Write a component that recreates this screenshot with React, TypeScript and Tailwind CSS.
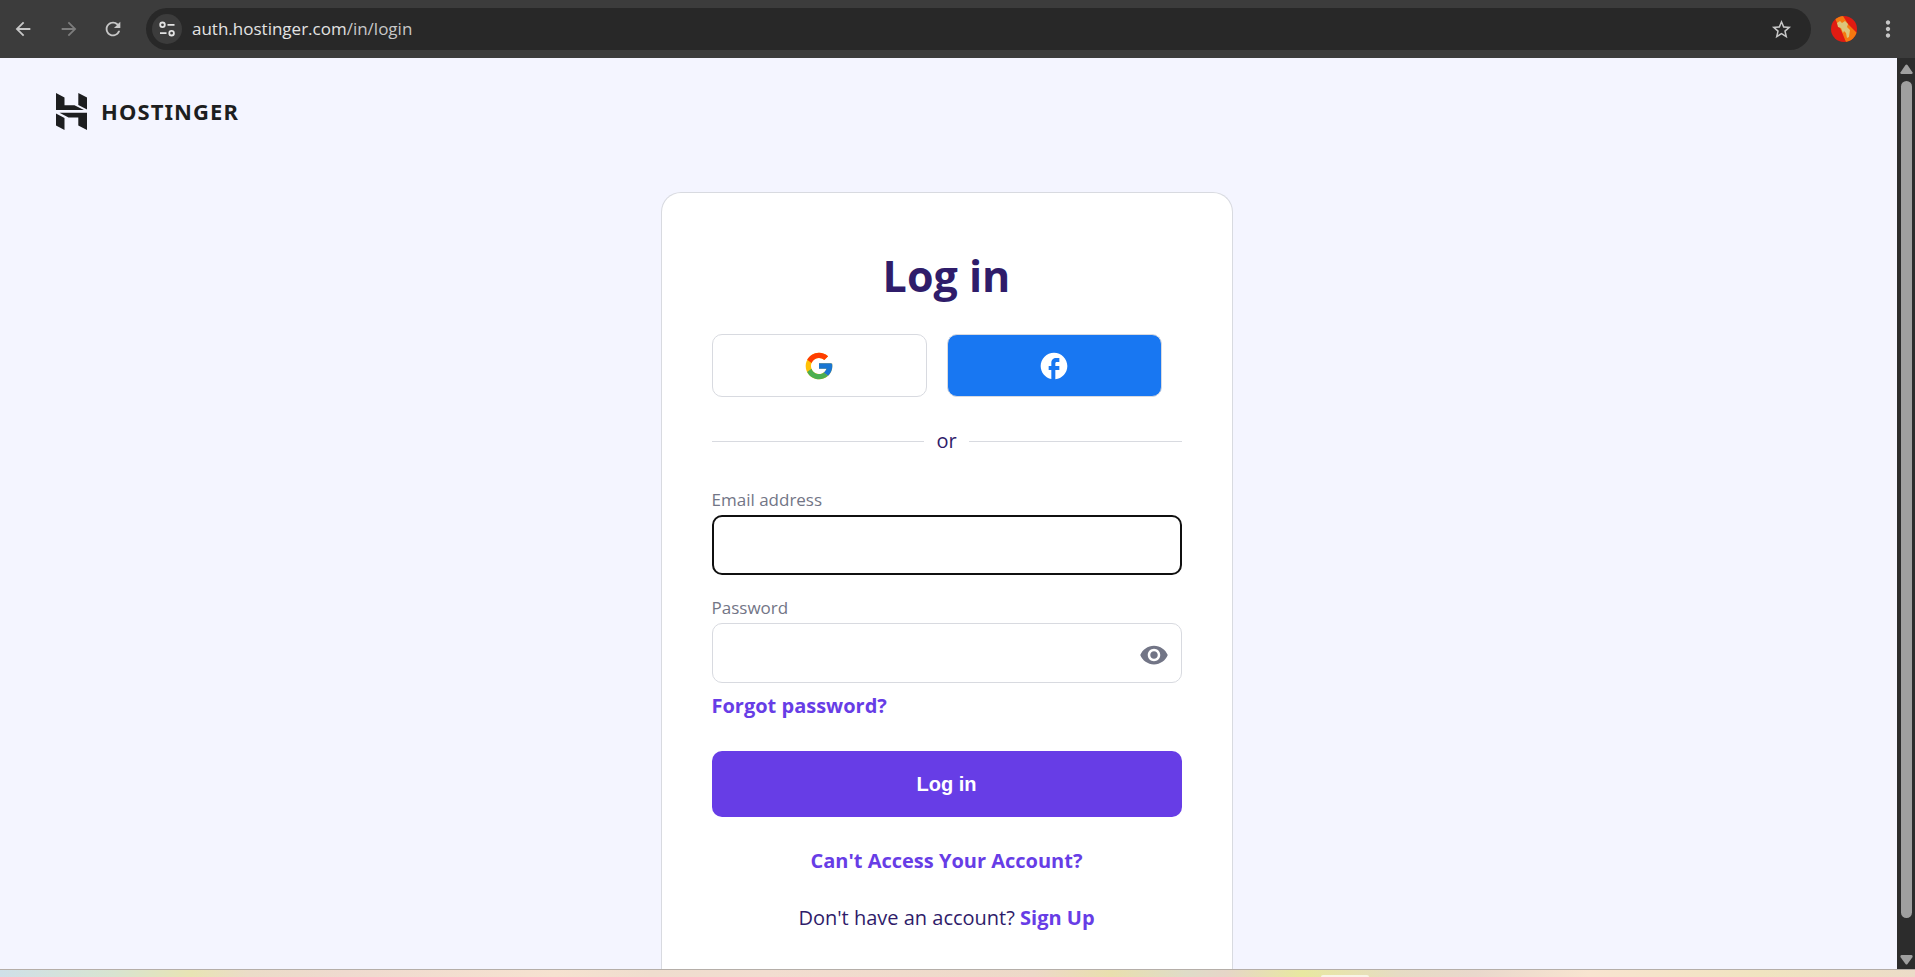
import { useState } from "react";
import { FcGoogle } from "react-icons/fc";
import {
  MdArrowBack,
  MdArrowForward,
  MdFacebook,
  MdMoreVert,
  MdRefresh,
  MdStarBorder,
  MdVisibility,
} from "react-icons/md";

function BrowserBar() {
  return (
    <header className="flex h-[58px] shrink-0 items-center bg-[#3c3c3c] pr-3.5 pl-3 text-[#c7c7c7]">
      <button type="button" aria-label="Back" className="mr-6">
        <MdArrowBack size={22} />
      </button>
      <button type="button" aria-label="Forward" className="mr-[22px] text-[#7d7d7d]">
        <MdArrowForward size={22} />
      </button>
      <button type="button" aria-label="Reload" className="mr-[22px]">
        <MdRefresh size={22} />
      </button>

      <div className="flex h-[42px] flex-1 items-center rounded-full bg-[#282828] pr-[18px] pl-1.5">
        <button
          type="button"
          aria-label="Site information"
          className="flex size-[30px] items-center justify-center rounded-full bg-[#3c3c3c]"
        >
          <svg width="16" height="16" viewBox="0 0 16 16" fill="none" stroke="#e3e3e3" strokeWidth="1.8">
            <circle cx="3.5" cy="3.8" r="2.3" />
            <path d="M8.5 3.8H15.5M1 12.2H7.5" />
            <circle cx="12.6" cy="12.2" r="2.3" />
          </svg>
        </button>
        <div className="ml-2.5 flex-1 font-['Open_Sans',sans-serif] text-[17px] text-[#e3e3e3]">
          auth.hostinger.com<span className="text-[#c7c7c7]">/in/login</span>
        </div>
        <button type="button" aria-label="Bookmark this page">
          <MdStarBorder size={23} />
        </button>
      </div>

      <button type="button" aria-label="Profile" className="ml-5">
        <Avatar />
      </button>
      <button type="button" aria-label="Menu" className="ml-[18px]">
        <MdMoreVert size={26} />
      </button>
    </header>
  );
}

function Avatar() {
  return (
    <svg width="26" height="26" viewBox="0 0 26 26">
      <clipPath id="avatar">
        <circle cx="13" cy="13" r="13" />
      </clipPath>
      <g clipPath="url(#avatar)">
        <rect width="26" height="26" fill="#e01b12" />
        <path d="M3 0H12L17 8L26 17V26H15L10 14L6 7Z" fill="#f5780f" />
        <path
          d="M6 7L9 5L11 7L14 5L17 8L16 11L19 14L18 21L16 22L15 17L13 15L12 17L10 12L7 11Z"
          fill="#dcc57a"
        />
      </g>
    </svg>
  );
}

function Logo() {
  return (
    <a href="#" className="flex w-fit items-center gap-3.5 text-[#1d1e20]">
      <svg width="31" height="37" viewBox="0 0 31 37" fill="currentColor">
        <path d="M0 17V0L8.5 4.5V12.3H18.5L28 17Z" />
        <path d="M22.3 0L31 4.6V16.5L22.3 12Z" />
        <path d="M0 20.5L8.5 25V37L0 32.4Z" />
        <path d="M3.5 19.7H31V37L22.3 32.5V24.5H12.5Z" />
      </svg>
      <span className="pb-0.5 font-['Noto_Sans',sans-serif] text-[22px] leading-none font-bold tracking-wider">
        HOSTINGER
      </span>
    </a>
  );
}

function LoginCard() {
  const [email, setEmail] = useState("");
  const [password, setPassword] = useState("");
  const [visible, setVisible] = useState(false);

  return (
    <form
      onSubmit={(e) => e.preventDefault()}
      className="mx-auto w-full max-w-[572px] rounded-t-[20px] border border-b-0 border-[#d8dae0] bg-white px-[50px] pt-[58px] pb-8 text-xl text-[#2f1c6a]"
    >
      <h1 className="text-center text-[43px] leading-[50px] font-bold">Log in</h1>

      <div className="mt-[33px] grid grid-cols-2">
        <button
          type="button"
          aria-label="Log in with Google"
          className="mr-5 flex h-[63px] items-center justify-center rounded-[10px] border border-[#d8dae0]"
        >
          <FcGoogle size={32} />
        </button>
        <button
          type="button"
          aria-label="Log in with Facebook"
          className="mr-5 flex h-[63px] items-center justify-center rounded-[10px] border border-[#d8dae0] bg-[#1877f2] text-white"
        >
          <MdFacebook size={32} />
        </button>
      </div>

      <div className="mt-[30px] flex items-center gap-3 leading-7">
        <div className="h-px flex-1 bg-[#d8dae0]" />
        or
        <div className="h-px flex-1 bg-[#d8dae0]" />
      </div>

      <label htmlFor="email" className="mt-[31px] mb-px block text-[17px] leading-7 text-[#727586]">
        Email address
      </label>
      <input
        id="email"
        type="email"
        value={email}
        onChange={(e) => setEmail(e.target.value)}
        className="block h-[60px] w-full rounded-[10px] border-2 border-[#101010] px-4 outline-none"
      />

      <label htmlFor="password" className="mt-[19px] mb-px block text-[17px] leading-7 text-[#727586]">
        Password
      </label>
      <div className="flex h-[60px] items-center rounded-[10px] border border-[#d8dae0] pr-3 pl-4">
        <input
          id="password"
          type={visible ? "text" : "password"}
          value={password}
          onChange={(e) => setPassword(e.target.value)}
          className="h-full flex-1 outline-none"
        />
        <button
          type="button"
          aria-label="Show password"
          onClick={() => setVisible(!visible)}
          className="pt-1 text-[#727586]"
        >
          <MdVisibility size={30} />
        </button>
      </div>
      <a href="#" className="mt-[7px] block w-fit leading-8 font-bold text-[#673de6]">
        Forgot password?
      </a>

      <button
        type="submit"
        className="mt-[29px] h-[66px] w-full rounded-[10px] bg-[#673de6] font-['Liberation_Sans',sans-serif] font-bold text-white"
      >
        Log in
      </button>

      <a href="#" className="mx-auto mt-7 block w-fit leading-8 font-bold text-[#673de6]">
        Can't Access Your Account?
      </a>
      <p className="mt-[25px] text-center leading-8">
        Don't have an account?{" "}
        <a href="#" className="font-bold text-[#673de6]">
          Sign Up
        </a>
      </p>
    </form>
  );
}

function Scrollbar() {
  return (
    <div className="flex w-[18px] shrink-0 flex-col items-center bg-[#2c2c2c] py-1">
      <svg width="13" height="19" viewBox="0 0 13 19" fill="#9f9f9f">
        <path d="M5.5 3Q6.5 2 7.5 3L12.6 10.5Q12.8 12 11.5 12H1.5Q0.2 12 0.4 10.5Z" />
      </svg>
      <div className="w-[11px] flex-1 rounded-full bg-[#9f9f9f]" />
      <svg width="13" height="47" viewBox="0 0 13 47" fill="#9f9f9f">
        <path d="M5.5 46Q6.5 47 7.5 46L12.6 39Q12.8 37 11.5 37H1.5Q0.2 37 0.4 39Z" />
      </svg>
    </div>
  );
}

export default function App() {
  return (
    <div className="flex h-screen flex-col overflow-hidden font-['Open_Sans',sans-serif]">
      <BrowserBar />
      <div className="flex min-h-0 flex-1">
        <main className="flex min-w-0 flex-1 flex-col overflow-hidden bg-[#f4f5ff] pr-1">
          <div className="px-14 pt-[35px] pb-[62px]">
            <Logo />
          </div>
          <div className="flex flex-1">
            <LoginCard />
          </div>
        </main>
        <Scrollbar />
      </div>
      {/* Sliver of the taskbar below the window */}
      <footer className="flex h-2 shrink-0 items-end border-t border-[#b5aea8] bg-[linear-gradient(to_right,#cfe0e8_0%,#d8e4d0_6%,#e8e4b4_10%,#ebdcc8_13%,#efdacf_18%,#f6e2d0_29%,#efddce_34%,#f2ddd0_40%,#edd9c8_54%,#e9dfae_58%,#dfdcc8_62%,#e6d6c8_64%,#e8e8a0_68%,#e6dcc4_73%,#e9d8cc_77%,#f8e4d0_83%,#f0e4c0_92%,#ecdcc8_100%)]">
        <div className="ml-[69%] h-0.5 w-12 rounded-t-sm bg-[#f8f4e6]" />
      </footer>
    </div>
  );
}
